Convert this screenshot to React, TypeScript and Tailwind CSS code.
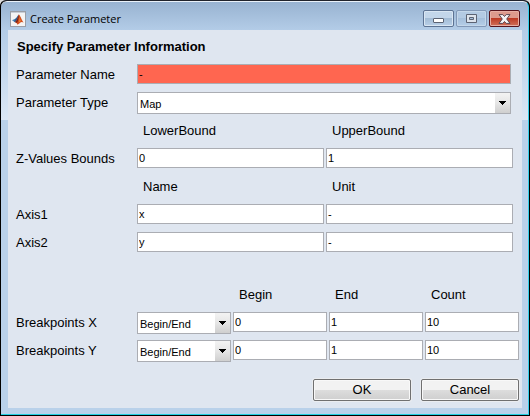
import { useState } from 'react';
import type { ReactNode } from 'react';

const boxClass =
  'block h-5 w-full min-w-0 rounded-none border border-[#abadb3] px-px text-[11px] leading-4 text-black outline-none';

function Field({ id, label, value, invalid }: { id?: string; label?: string; value: string; invalid?: boolean }) {
  const [text, setText] = useState(value);
  return (
    <input
      id={id}
      aria-label={label}
      type="text"
      value={text}
      onChange={(e) => setText(e.target.value)}
      className={`${boxClass} ${invalid ? 'bg-[#ff6650]' : 'bg-white'}`}
    />
  );
}

function Picker({ id, options }: { id: string; options: string[] }) {
  return (
    <div className="relative min-w-0">
      <select
        id={id}
        className="block h-[22px] w-full appearance-none rounded-none border border-[#abadb3] bg-white pt-0.5 pr-4 pl-0.5 text-[11px] leading-4 text-black outline-none"
      >
        {options.map((o) => (
          <option key={o}>{o}</option>
        ))}
      </select>
      <span className="pointer-events-none absolute top-px right-px bottom-px flex w-[15px] items-center justify-center bg-linear-to-b from-[#f3f3f3] via-[#e6e6e6] to-[#cfcfcf]">
        <svg width="7" height="4" viewBox="0 0 7 4" aria-hidden="true" shapeRendering="crispEdges">
          <path d="M0 0h7v1H6v1H5v1H4v1H3V3H2V2H1V1H0z" fill="#000" />
        </svg>
      </span>
    </div>
  );
}

function Row({ label, htmlFor, children }: { label?: string; htmlFor?: string; children: ReactNode }) {
  return (
    <div className="flex h-7 pt-1">
      <div className="w-[129px] shrink-0 pl-2 leading-[22px] whitespace-nowrap">
        {label && <label htmlFor={htmlFor}>{label}</label>}
      </div>
      <div className="min-w-0 flex-1">{children}</div>
    </div>
  );
}

const pair = 'grid grid-cols-2 gap-0.5 pr-[9px]';
const quad = 'grid grid-cols-4 gap-0.5 pr-[3px]';

function MatlabLogo() {
  return (
    <svg width="16" height="16" viewBox="0 0 16 16" aria-hidden="true" className="shrink-0">
      <rect x="0.5" y="0.5" width="15" height="15" fill="#f4f4f4" stroke="#9a9ea6" />
      <rect x="1" y="1" width="14" height="1" fill="#c9ced6" />
      <path d="M2 9.3 5.2 7.8 7 9.2 5 11.3z" fill="#4a86b8" />
      <path d="M5.2 7.8C6.6 7.3 7.6 4.6 8.8 3.6L7.6 8.2 5 11.3 4.2 10.4z" fill="#2f5f93" />
      <path d="M8.8 3.6C10 3.8 11.6 9 13.6 11.6 12 10.6 11 10.9 9.6 12.2 8.6 13.2 7.8 13.4 7.2 13.4 6.9 12.3 6.2 11.4 5 11.3 7.2 10 7.8 6 8.8 3.6z" fill="#d4501e" />
      <path d="M8.8 3.6C9 6 8.6 9.6 7 12 6.6 11.6 6 11.3 5 11.3 7.2 10 7.8 6 8.8 3.6z" fill="#7c2418" />
      <path d="M9.2 5.2C9.8 7.4 9.8 9.6 9 11.6L10.6 10z" fill="#f6a03a" />
    </svg>
  );
}

const captionButton = 'flex h-[17px] w-[31px] items-center justify-center rounded-xs border';

function TitleBar() {
  return (
    <header className="flex h-7 items-start">
      <div className="flex flex-1 items-center gap-1 pt-2 pl-[9px]">
        <MatlabLogo />
        <h1 className="pt-px font-['Open_Sans','Noto_Sans',sans-serif] text-[11px] leading-4 text-black">
          Create Parameter
        </h1>
      </div>
      <div className="flex gap-0.5 pt-2 pr-2">
        <button
          type="button"
          aria-label="Minimize"
          className={`${captionButton} border-[#5d7393] bg-linear-to-b from-[#c3d6ea] from-50% via-[#a3bcd6] via-50% to-[#b9d0e8] shadow-[inset_0_0_0_1px_#d9e6f3]`}
        >
          <svg width="11" height="5" viewBox="0 0 11 5" className="mt-1">
            <rect x="0.5" y="0.5" width="10" height="4" rx="0.5" fill="#fff" stroke="#5c6373" />
          </svg>
        </button>
        <button
          type="button"
          aria-label="Maximize"
          className={`${captionButton} border-[#8298b7] bg-linear-to-b from-[#b3cae3] from-50% via-[#a5bfdb] via-50% to-[#b5cee8] shadow-[inset_0_0_0_1px_#c4d7ea]`}
        >
          <svg width="11" height="9" viewBox="0 0 11 9">
            <path d="M.5.5h10v8H.5zM3.5 3.5h4v2h-4z" fill="#dde3ec" stroke="#5c6373" fillRule="evenodd" />
          </svg>
        </button>
        <button
          type="button"
          aria-label="Close"
          className={`${captionButton} border-[#56131c] bg-linear-to-b from-[#dd9a8d] from-50% via-[#bd3a24] via-50% to-[#d0705a] shadow-[inset_0_0_0_1px_#e6aea4]`}
        >
          <svg width="13" height="10" viewBox="0 0 13 10">
            <path
              d="M1 .6h3.800L6.500 2.500 8.200.6H12L8.700 5 12 9.400H8.200L6.500 7.500 4.800 9.400H1L4.300 5z"
              fill="#f4f4f6"
              stroke="#5b4650"
              strokeWidth="1"
            />
          </svg>
        </button>
      </div>
    </header>
  );
}

const buttonClass =
  'h-[22px] w-[98px] rounded-xs border border-[#707070] bg-linear-to-b from-[#f2f2f2] from-50% via-[#dddddd] via-50% to-[#cfcfcf] text-[13px] leading-5 text-black shadow-[inset_0_0_0_1px_#f8f8f8,0_0_0_1px_#ebedf0]';

export default function App() {
  return (
    <div className="min-h-screen bg-[#dcdcdc] font-['Liberation_Sans',Arial,sans-serif] text-[13px] text-black">
      <main className="flex min-h-screen flex-col rounded-t-md border border-black border-t-[#20232b] bg-black">
        <div className="flex flex-1 flex-col rounded-t-md border-t border-r border-b border-t-[#e9f1f9] border-r-[#35d0ec] border-b-[#21cfe0] bg-[linear-gradient(#98b3d1_0px,#b3cce7_28px,#dbe7f5_118px,#b9d1ea_118px)]">
          <TitleBar />
          <form className="mr-[6px] mb-[6px] ml-[7px] flex-1 bg-[#dfe6f0]" onSubmit={(e) => e.preventDefault()}>
            <h2 className="h-[30px] pt-[7px] pl-[9px] leading-5 font-bold">Specify Parameter Information</h2>
            <Row label="Parameter Name" htmlFor="name">
              <div className="pr-[11px]"><Field id="name" value="-" invalid /></div>
            </Row>
            <Row label="Parameter Type" htmlFor="type">
              <div className="pr-[11px]"><Picker id="type" options={['Map', 'Curve', 'Value']} /></div>
            </Row>
            <Row>
              <div className={`${pair} leading-[22px]`}>
                <span className="pl-1.5">LowerBound</span>
                <span className="pl-1.5">UpperBound</span>
              </div>
            </Row>
            <Row label="Z-Values Bounds" htmlFor="lower">
              <div className={pair}><Field id="lower" value="0" /><Field label="UpperBound" value="1" /></div>
            </Row>
            <Row>
              <div className={`${pair} leading-[22px]`}>
                <span className="pl-1.5">Name</span>
                <span className="pl-1.5">Unit</span>
              </div>
            </Row>
            <Row label="Axis1" htmlFor="axis1">
              <div className={pair}><Field id="axis1" value="x" /><Field label="Axis1 unit" value="-" /></div>
            </Row>
            <Row label="Axis2" htmlFor="axis2">
              <div className={pair}><Field id="axis2" value="y" /><Field label="Axis2 unit" value="-" /></div>
            </Row>
            <div className="h-6" />
            <Row>
              <div className={`${quad} leading-[22px]`}>
                <span />
                <span className="pl-1.5">Begin</span>
                <span className="pl-1.5">End</span>
                <span className="pl-1.5">Count</span>
              </div>
            </Row>
            {['X', 'Y'].map((axis) => (
              <Row key={axis} label={`Breakpoints ${axis}`} htmlFor={`mode${axis}`}>
                <div className={quad}>
                  <Picker id={`mode${axis}`} options={['Begin/End', 'Vector']} />
                  <Field label={`Begin ${axis}`} value="0" />
                  <Field label={`End ${axis}`} value="1" />
                  <Field label={`Count ${axis}`} value="10" />
                </div>
              </Row>
            ))}
            <div className="flex justify-end gap-2.5 pt-[15px] pr-[3px] pb-[7px]">
              <button type="submit" className={buttonClass}>OK</button>
              <button type="button" className={buttonClass}>Cancel</button>
            </div>
          </form>
        </div>
      </main>
    </div>
  );
}
